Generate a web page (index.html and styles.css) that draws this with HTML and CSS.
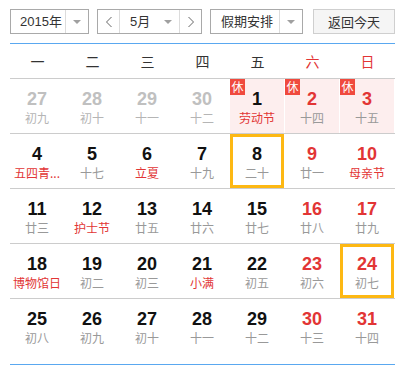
FILE: index.html
```html
<!DOCTYPE html>
<html lang="zh">
<head>
<meta charset="utf-8">
<link rel="stylesheet" href="styles.css">
</head>
<body>
<div class="cal">
  <div class="toolbar">
    <div class="sel year"><span class="val">2015年</span><span class="drop"><i class="arrow"></i></span></div>
    <div class="sel month">
      <span class="nav"><svg width="8" height="12" viewBox="0 0 8 12"><polyline points="6.5,1 1.5,6 6.5,11" fill="none" stroke="#666" stroke-width="1"/></svg></span>
      <span class="val">5月</span><span class="drop plain"><i class="arrow"></i></span>
      <span class="nav next"><svg width="8" height="12" viewBox="0 0 8 12"><polyline points="1.5,1 6.5,6 1.5,11" fill="none" stroke="#666" stroke-width="1"/></svg></span>
    </div>
    <div class="sel holiday"><span class="val">假期安排</span><span class="drop"><i class="arrow"></i></span></div>
    <div class="btn-today">返回今天</div>
  </div>
  <div class="grid">
    <div class="week">
      <div>一</div><div>二</div><div>三</div><div>四</div><div>五</div><div class="red">六</div><div class="red">日</div>
    </div>
    <div class="row">
      <div class="day other"><b>27</b><span>初九</span></div>
      <div class="day other"><b>28</b><span>初十</span></div>
      <div class="day other"><b>29</b><span>十一</span></div>
      <div class="day other"><b>30</b><span>十二</span></div>
      <div class="day rest"><em>休</em><b>1</b><span class="fest">劳动节</span></div>
      <div class="day rest wk"><em>休</em><b>2</b><span>十四</span></div>
      <div class="day rest wk"><em>休</em><b>3</b><span>十五</span></div>
    </div>
    <div class="row">
      <div class="day"><b>4</b><span class="fest">五四青...</span></div>
      <div class="day"><b>5</b><span>十七</span></div>
      <div class="day"><b>6</b><span class="fest">立夏</span></div>
      <div class="day"><b>7</b><span>十九</span></div>
      <div class="day sel-day"><b>8</b><span>二十</span></div>
      <div class="day wk"><b>9</b><span>廿一</span></div>
      <div class="day wk"><b>10</b><span class="fest">母亲节</span></div>
    </div>
    <div class="row">
      <div class="day"><b>11</b><span>廿三</span></div>
      <div class="day"><b>12</b><span class="fest">护士节</span></div>
      <div class="day"><b>13</b><span>廿五</span></div>
      <div class="day"><b>14</b><span>廿六</span></div>
      <div class="day"><b>15</b><span>廿七</span></div>
      <div class="day wk"><b>16</b><span>廿八</span></div>
      <div class="day wk"><b>17</b><span>廿九</span></div>
    </div>
    <div class="row">
      <div class="day"><b>18</b><span class="fest">博物馆日</span></div>
      <div class="day"><b>19</b><span>初二</span></div>
      <div class="day"><b>20</b><span>初三</span></div>
      <div class="day"><b>21</b><span class="fest">小满</span></div>
      <div class="day"><b>22</b><span>初五</span></div>
      <div class="day wk"><b>23</b><span>初六</span></div>
      <div class="day wk sel-day"><b>24</b><span>初七</span></div>
    </div>
    <div class="row last">
      <div class="day"><b>25</b><span>初八</span></div>
      <div class="day"><b>26</b><span>初九</span></div>
      <div class="day"><b>27</b><span>初十</span></div>
      <div class="day"><b>28</b><span>十一</span></div>
      <div class="day"><b>29</b><span>十二</span></div>
      <div class="day wk"><b>30</b><span>十三</span></div>
      <div class="day wk"><b>31</b><span>十四</span></div>
    </div>
  </div>
</div>
</body>
</html>
```
FILE: styles.css
```css
* { box-sizing: border-box; }
html, body { margin: 0; padding: 0; background: #fff; }
body {
  font-family: "Liberation Sans", "Noto Sans CJK SC", sans-serif;
  color: #333;
}
.cal {
  width: 403px;
  padding: 9px 0 0 10px;
}
.toolbar {
  display: flex;
  align-items: stretch;
  width: 385px;
  height: 25px;
  font-size: 13px;
}
.sel {
  display: flex;
  align-items: stretch;
  border: 1px solid #a9a9a9;
  background: #fff;
  margin-right: 8px;
}
.sel .val {
  display: flex;
  align-items: center;
  line-height: 23px;
}
.drop {
  display: flex;
  align-items: center;
  justify-content: center;
  width: 23px;
  border-left: 1px solid #dcdcdc;
}
.drop.plain { border-left: 0; }
.arrow {
  display: block;
  width: 0;
  height: 0;
  border-left: 4px solid transparent;
  border-right: 4px solid transparent;
  border-top: 4px solid #a0a0a0;
}
.year { width: 79px; }
.year .val { width: 55px; padding-left: 9px; }
.month { width: 105px; }
.month .nav {
  display: flex;
  align-items: center;
  justify-content: center;
  width: 22px;
  border-right: 1px solid #dcdcdc;
}
.month .nav.next { border-right: 0; border-left: 1px solid #dcdcdc; }
.month .val { width: 36px; padding-left: 10px; }
.month .drop { width: 23px; }
.holiday { width: 93px; }
.holiday .val { width: 68px; padding-left: 10px; }
.btn-today {
  margin-left: auto;
  width: 82px;
  border: 1px solid #cfcfcf;
  background: #f5f5f5;
  display: flex;
  align-items: center;
  justify-content: center;
  color: #333;
}
.grid {
  width: 385px;
  margin-top: 9px;
  border-top: 1px solid #5aa8f0;
  border-bottom: 1px solid #5aa8f0;
  padding-bottom: 11px;
}
.week {
  display: grid;
  grid-template-columns: repeat(7, 55px);
  height: 35px;
  border-bottom: 1px solid #cccccc;
  font-size: 14px;
  line-height: 34px;
  text-align: center;
  color: #333;
  font-family: "Noto Sans CJK SC", sans-serif;
}
.week .red { color: #e23535; }
.row {
  display: grid;
  grid-template-columns: repeat(7, 55px);
  height: 55px;
  border-bottom: 1px solid #cccccc;
}
.row.last { border-bottom: 0; height: 54px; }
.day {
  position: relative;
  width: 54px;
  height: 54px;
  text-align: center;
  padding-top: 10px;
}
.day b {
  display: block;
  font-family: "Liberation Sans", sans-serif;
  font-weight: bold;
  font-size: 18px;
  line-height: 20px;
  color: #111;
}
.day span {
  display: block;
  margin-top: 1px;
  font-family: "Noto Sans CJK SC", sans-serif;
  font-size: 12px;
  line-height: 16px;
  color: #999;
  white-space: nowrap;
}
.day.wk b { color: #e23535; }
.day span.fest { color: #e23535; }
.day.other b { color: #c0c0c0; }
.day.other span { color: #b5b5b5; }
.day.rest { background: #fdeeee; }
.day em {
  position: absolute;
  left: 0;
  top: 0;
  width: 15px;
  height: 16px;
  background: #f04a3e;
  color: #fff;
  font-style: normal;
  font-family: "Noto Sans CJK SC", sans-serif;
  font-size: 12px;
  line-height: 16px;
  text-align: center;
}
.day.sel-day {
  border: 3px solid #fdb813;
  padding-top: 7px;
}
```
